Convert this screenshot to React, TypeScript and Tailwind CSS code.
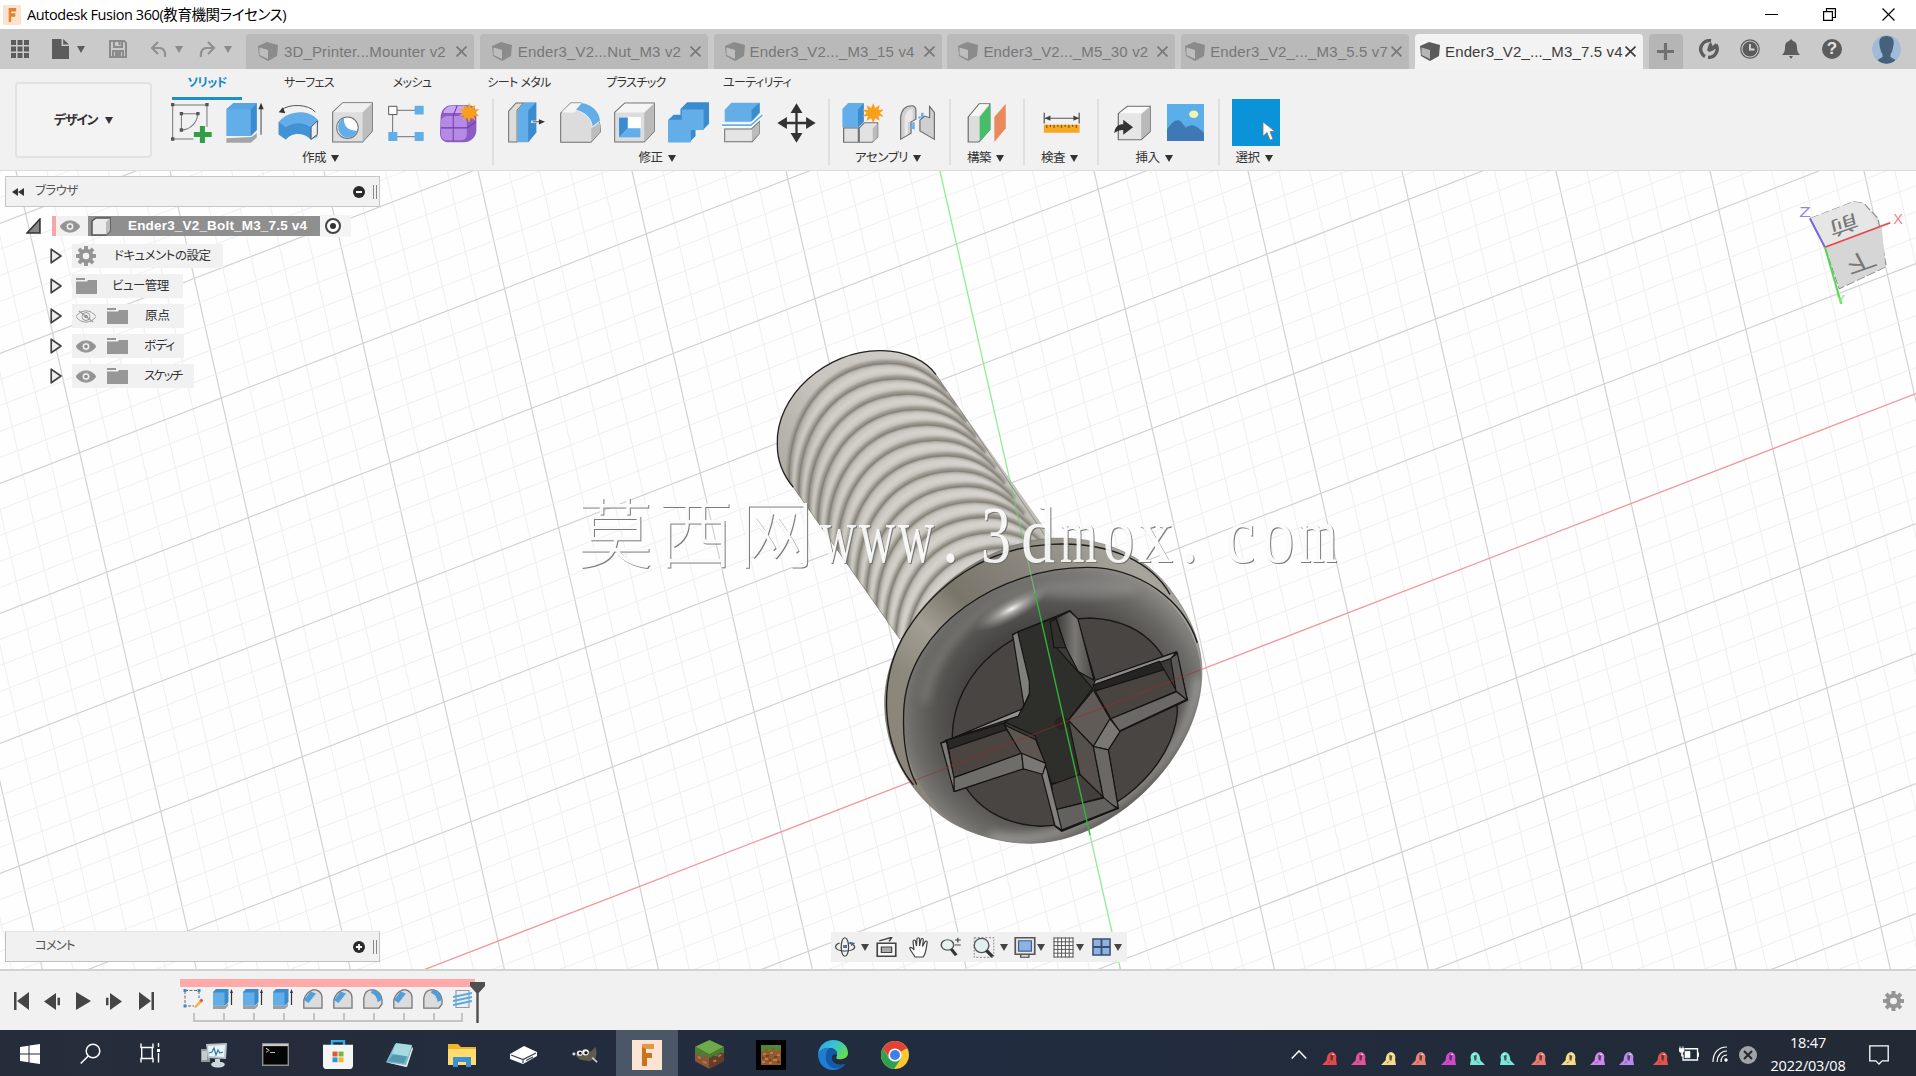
import type { ReactNode } from 'react'
import clsx from 'clsx'

type IconProps = { box: string; className?: string; children: ReactNode }

// Free-aspect icon: the box is stretched to the size given by the classes
function Icon({ box, className, children }: IconProps) {
  return (
    <svg viewBox={box} preserveAspectRatio="none" className={clsx('block shrink-0', className)} fill="none">
      {children}
    </svg>
  )
}

function Caret({ className }: { className?: string }) {
  return (
    <svg viewBox="0 0 8 7" className={clsx('block shrink-0 w-[8px] h-[7px]', className)}>
      <path d="M0 0h8L4 7z" fill="currentColor" />
    </svg>
  )
}

const JP = "font-['Liberation_Sans','Noto_Sans_CJK_JP',sans-serif] [font-feature-settings:'palt']"

/* ---------- title bar ---------- */

function TitleBar() {
  return (
    <div className="h-[29px] bg-white flex items-center shrink-0">
      <div className="w-[18px] h-[20px] ml-[3px] bg-[#fde3cd] flex items-center justify-center">
        <Icon box="0 0 12 16" className="w-[10px] h-[14px]">
          <path d="M2 0h9v4H5v2h5v4H5v6H2z" fill="#dd8435" />
        </Icon>
      </div>
      <span className="ml-[6px] text-[14.5px] leading-[28px] text-black whitespace-nowrap tracking-[-0.42px] font-['Open_Sans','Noto_Sans_CJK_JP',sans-serif] [font-feature-settings:'palt']">
        Autodesk Fusion 360(教育機関ライセンス)
      </span>
      <div className="ml-auto flex items-center h-full pr-[21px]">
        <div className="w-[13px] h-px bg-black mr-[45px]" />
        <svg viewBox="0 0 13 13" className="w-[13px] h-[13px] mr-[46px]" fill="none" stroke="#000" strokeWidth="1.2">
          <path d="M.6 3.6h8.8v8.8H.6zM3.5 3.2V.6h8.9v8.9H9.8" />
        </svg>
        <svg viewBox="0 0 12 12" className="w-[13px] h-[13px]" stroke="#000" strokeWidth="1.1">
          <path d="M.5.5l11 11M11.5.5l-11 11" />
        </svg>
      </div>
    </div>
  )
}

/* ---------- document tabs ---------- */

const TABS = [
  { name: '3D_Printer...Mounter v2', pad: 'pl-[12px]', gap: 'ml-[6px]' },
  { name: 'Ender3_V2...Nut_M3 v2', pad: 'pl-[12px]', gap: 'ml-[6px]' },
  { name: 'Ender3_V2..._M3_15 v4', pad: 'pl-[11px]', gap: 'ml-[5px]' },
  { name: 'Ender3_V2..._M5_30 v2', pad: 'pl-[11px]', gap: 'ml-[5px]' },
  { name: 'Ender3_V2_..._M3_5.5 v7', pad: 'pl-[4px]', gap: 'ml-[5px]' },
  { name: 'Ender3_V2_..._M3_7.5 v4', pad: 'pl-[5px]', gap: 'ml-[5px]', active: true },
]

function DocumentTabs() {
  return (
    <div className="h-[40px] bg-[#cacaca] flex shrink-0 text-[#5c5c5c]">
      <div className="w-[246px] flex items-center shrink-0">
        <Icon box="0 0 18 18" className="w-[18px] h-[18px] ml-[11px]">
          <path fill="currentColor" d="M0 0h5v5H0zM6.500 0h5v5h-5zM13 0h5v5h-5zM0 6.500h5v5H0zM6.500 6.500h5v5h-5zM13 6.500h5v5h-5zM0 13h5v5H0zM6.500 13h5v5h-5zM13 13h5v5h-5z" />
        </Icon>
        <Icon box="0 0 16 20" className="w-[17px] h-[20px] ml-[23px]">
          <path fill="currentColor" d="M0 0h9v7h7v13H0zM10.500 0L16 5.500h-5.500z" />
        </Icon>
        <Caret className="ml-[8px]" />
        <Icon box="0 0 18 18" className="w-[18px] h-[18px] ml-[24px] text-[#8b8b8b]">
          <path d="M1 1h14l2 2v14H1zM5 1v6h8V1M4 17v-6h10v6M6 13h6M6 15h6M10.500 2v3" stroke="currentColor" strokeWidth="2" />
        </Icon>
        <Icon box="0 0 17 17" className="w-[17px] h-[17px] ml-[23px] text-[#919191]">
          <path d="M8 1L2 7l6 6M2 7h8q6 1 5 9" stroke="currentColor" strokeWidth="2.200" />
        </Icon>
        <Caret className="ml-[8px] text-[#8a8a8a]" />
        <Icon box="0 0 17 17" className="w-[17px] h-[17px] ml-[16px] text-[#919191]">
          <path d="M9 1l6 6-6 6M15 7H7q-6 1-5 9" stroke="currentColor" strokeWidth="2.200" />
        </Icon>
        <Caret className="ml-[8px] text-[#8a8a8a]" />
      </div>
      <div className="flex items-end gap-[5.800px]">
        {TABS.map(t => (
          <div
            key={t.name}
            className={clsx(
              'w-[228px] h-[35px] rounded-t-[4px] flex items-center',
              t.pad,
              t.active ? 'bg-[#f3f3f3] text-[#3c3c3c]' : 'bg-[#b9b9b9] text-[#777]',
            )}
          >
            <Icon box="0 0 20 19" className="w-[20px] h-[19px]">
              <path d="M0 4L9 0l11 3-1 11-9 5-9-5z" fill={t.active ? '#5a5a5a' : '#8b8b8b'} />
              <path d="M1.500 5.500L10 8v9l-8.500-4z" fill={t.active ? '#b5b5b5' : '#bdbdbd'} />
            </Icon>
            <span className={clsx("flex-1 pt-[2px] text-[15px] whitespace-nowrap tracking-[0.150px] font-['Liberation_Sans',sans-serif]", t.gap)}>
              {t.name}
            </span>
            <Icon box="0 0 10 10" className="w-[11px] h-[11px] mr-[7px]">
              <path d="M.5.5l9 9M9.500.5l-9 9" stroke="currentColor" strokeWidth="1.500" />
            </Icon>
          </div>
        ))}
        <div className="w-[34px] h-[35px] rounded-t-[4px] bg-[#b5b5b5] flex items-center justify-center">
          <Icon box="0 0 16 16" className="w-[17px] h-[17px]">
            <path d="M8 0v16M0 8h16" stroke="#707070" strokeWidth="3" />
          </Icon>
        </div>
      </div>
      <div className="flex items-center ml-auto pr-[15px]">
        <Icon box="0 0 20 20" className="w-[20px] h-[20px] mr-[21px]">
          <path d="M6 17.500A8.500 8.500 0 0 1 12 1.800M17 5.500A8.500 8.500 0 0 1 9 18.300" stroke="#5c5c5c" strokeWidth="3.400" />
          <path d="M8 11l2-6 2-2 1.500 4L17 4l1 5-5 3-3 1z" fill="#5c5c5c" />
        </Icon>
        <Icon box="0 0 20 20" className="w-[20px] h-[20px] mr-[22px]">
          <circle cx="10" cy="10" r="9.200" stroke="#5c5c5c" strokeWidth="1.200" />
          <circle cx="10" cy="10" r="7.500" fill="#5c5c5c" />
          <path d="M10 5v5.500h4.500" stroke="#d8d8d8" strokeWidth="1.800" />
        </Icon>
        <Icon box="0 0 18 20" className="w-[18px] h-[20px] mr-[22px]">
          <path d="M9 0l2 2c3 1 4 3 4 7 0 3 1 5 3 7H0c2-2 3-4 3-7 0-4 1-6 4-7zM7 17h4l-2 3z" fill="#5c5c5c" />
        </Icon>
        <div className="w-[20px] h-[20px] rounded-full bg-[#5c5c5c] text-[#e2e2e2] text-[17px] leading-[20px] text-center font-bold font-['Liberation_Sans',sans-serif] mr-[30px]">
          ?
        </div>
        <Icon box="0 0 29 29" className="w-[29px] h-[29px] rounded-full">
          <circle cx="14.500" cy="14.500" r="14.500" fill="#9fbbd6" />
          <path d="M14.500 1c6 0 8 4 7 9-1 6-2 8-3 9v3l5 3c-5 5-13 5-18 0l5-3v-3c-1-1-2-3-3-9-1-5 1-9 7-9z" fill="#46617c" />
        </Icon>
      </div>
    </div>
  )
}

/* ---------- ribbon icons ---------- */

const B = '#63aee8'
const BD = '#3a8bd0'
const G = '#6f6f6f'

const star = 'M0-29l6 14 13-9-4 15 16-2-12 11 12 10-16-1 4 14-13-8-6 14-6-14-13 8 4-14-16 1 12-10-12-11 16 2-4-15 13 9z'

const SketchIcon = () => (
  <Icon box="34 98 122 120" className="w-[41px] h-[40px]">
    <path d="M39 104h102v66M39 104v102h62" stroke="#777" strokeWidth="3" />
    <path d="M65 130h48c0 25-20 48-48 49z" stroke="#777" strokeWidth="3" />
    <path fill="#555" d="M34 98h10v10H34zM136 98h10v10h-10zM34 201h10v10H34zM60 125h10v10H60zM109 125h10v10h-10zM60 174h10v10H60z" />
    <path fill="#2f9e44" d="M120 167h15v18h20v15h-20v18h-15v-18h-18v-15h18z" />
  </Icon>
)

const ExtrudeIcon = () => (
  <Icon box="197 96 118 124" className="w-[39px] h-[41px]">
    <path d="M198 206l76-4 16-12v14l-18 15h-74z" fill="#a5a5a5" />
    <path d="M198 118l22-19h70v82l-18 18h-74z" fill={B} />
    <path d="M272 118l18-19v82l-18 18z" fill={BD} />
    <path d="M198 118l22-19h70l-18 19z" fill="#57a5e2" />
    <path d="M303 110v85" stroke="#444" strokeWidth="3" />
    <path d="M303 98l8 20h-16z" fill="#333" />
  </Icon>
)

const RevolveIcon = () => (
  <Icon box="354 98 124 120" className="w-[41px] h-[40px]">
    <path d="M363 120c25-22 85-18 104 5" stroke="#555" strokeWidth="3" />
    <path d="M356 126l20 3-7-18z" fill="#333" />
    <path d="M356 155c30-36 90-40 120-5l-3 50-20 8c-25-25-60-20-75 0l-22-15z" fill={B} />
    <path d="M356 155l22 16c25-16 50-16 76 0v36c-25-25-60-20-76 0l-22-15z" fill={BD} opacity=".8" />
    <path d="M454 170l19-18v40l-19 15z" fill="#eee" stroke="#555" strokeWidth="3" />
  </Icon>
)

const HoleIcon = () => (
  <Icon box="516 98 122 121" className="w-[41px] h-[41px]">
    <path d="M518 128l30-28h88v84l-29 32h-89z" fill="#dedede" stroke={G} strokeWidth="3" />
    <path d="M607 129l28-28v82l-28 32z" fill="#bdbdbd" />
    <path d="M520 128l28-26h86l-27 26z" fill="#f0f0f0" />
    <circle cx="562" cy="174" r="32" fill="#fff" stroke={G} strokeWidth="3" />
    <path d="M552 144c-4 25 15 42 41 38-8 20-30 27-46 16-18-12-18-42 5-54z" fill={B} />
  </Icon>
)

const PatternIcon = () => (
  <Icon box="677 102 108 109" className="w-[36px] h-[36px]">
    <path d="M692 118h78M691 118v80M692 198h78" stroke={G} strokeWidth="3" />
    <path d="M679 106h25v25h-25z" fill="#fff" stroke="#555" strokeWidth="3" />
    <path d="M757 104h27v27h-27zM678 184h27v27h-27zM757 184h27v27h-27z" fill={B} />
  </Icon>
)

const FormIcon = () => (
  <Icon box="840 98 118 122" className="w-[39px] h-[41px]">
    <path d="M842 140c4-25 18-33 40-33h40c20 0 28 12 28 30v45c0 20-18 36-38 36h-44c-18 0-28-10-28-28z" fill="#8a5cc4" />
    <rect x="843" y="140" width="78" height="72" rx="17" fill="#b48ae6" />
    <path d="M850 128c8-16 16-19 34-19h38l-12 22h-58z" fill="#c8a6f0" />
    <path d="M843 175h79l26-18M880 215v-76l12-30" stroke="#6b3da0" strokeWidth="3" />
    <path d={star} transform="translate(928 130)" fill="#f9a01b" />
  </Icon>
)

const PressPullIcon = () => (
  <Icon box="55 97 110 122" className="w-[37px] h-[41px]">
    <path d="M57 124l22-24h22l-19 22v94H57z" fill="#dcdcdc" stroke={G} strokeWidth="3" />
    <path d="M84 122l20-24h35v90l-24 29H84z" fill={B} />
    <path d="M115 122l24-24v90l-24 29z" fill={BD} />
    <path d="M124 156h30" stroke="#fff" strokeWidth="7" />
    <path d="M128 156h25" stroke="#444" strokeWidth="3" />
    <path d="M165 156l-18-8v16z" fill="#333" />
  </Icon>
)

const FilletIcon = () => (
  <Icon box="212 97 122 122" className="w-[41px] h-[41px]">
    <path d="M214 130l30-30h30c40 5 58 40 58 86l-28 31h-90z" fill="#dcdcdc" stroke={G} strokeWidth="3" />
    <path d="M216 128l28-27h32l-20 27z" fill="#f5f5f5" />
    <path d="M276 99c40 5 56 36 56 54l-24 18c-2-22-16-42-50-50z" fill={B} stroke="#fff" strokeWidth="2" />
    <path d="M305 215v-40l26-17v28z" fill="#bdbdbd" />
  </Icon>
)

const ShellIcon = () => (
  <Icon box="374 97 122 122" className="w-[41px] h-[41px]">
    <path d="M376 128l30-28h88v84l-30 32h-88z" fill="#ddd" stroke={G} strokeWidth="3" />
    <path d="M464 129l28-28v82l-28 32z" fill="#bababa" />
    <path d="M379 128l27-26h86l-28 26z" fill="#f5f5f5" />
    <path d="M389 142h65v61h-65z" fill="#fff" />
    <path d="M389 203l27-28h37v28z" fill={B} />
    <path d="M389 143h26v33l-26 27z" fill={BD} />
  </Icon>
)

const CombineIcon = () => (
  <Icon box="535 97 122 122" className="w-[41px] h-[41px]">
    <path d="M536 150l16-15h20v-17l20-20h65v64l-18 18h-22v18l-18 19h-63z" fill={BD} />
    <path d="M536 150h40v-31h65v61h-38v37h-67z" fill={B} />
  </Icon>
)

const SplitIcon = () => (
  <Icon box="698 97 122 122" className="w-[41px] h-[41px]">
    <path d="M706 120l20-21h84v30l-24 27h-80z" fill={B} />
    <path d="M786 120l24-21v30l-24 27z" fill={BD} />
    <path d="M706 177h80l23-22v36l-21 24h-82z" fill="#e4e4e4" stroke={G} strokeWidth="3" />
    <path d="M787 178l22-21v34l-22 22z" fill="#bbb" />
    <path d="M698 166h86l34-31" stroke="#fff" strokeWidth="13" />
    <path d="M698 166h86l34-30" stroke={B} strokeWidth="5" />
  </Icon>
)

const MoveIcon = () => (
  <Icon box="860 97 118 120" className="w-[39px] h-[40px]">
    <path d="M919 115v84M880 157h80" stroke="#333" strokeWidth="7" />
    <path d="M919 98l18 29h-36zM919 216l18-29h-36zM861 157l29-18v36zM977 157l-29-18v36z" fill="#333" />
  </Icon>
)

const ComponentIcon = () => (
  <Icon box="497 308 100 122" className="w-[41px] h-[41px]">
    <path d="M501 385h36v43h-36zM539 385l12-15h33v42l-14 16h-31z" fill="#e2e2e2" stroke={G} strokeWidth="3" />
    <path d="M572 386l12-15v42l-12 14z" fill="#bbb" />
    <path d="M498 329l14-18h38v55l-14 18h-38z" fill={B} />
    <path d="M536 330l14-18v54l-14 18z" fill={BD} />
    <path d={star} transform="translate(573 341) scale(.85 1)" fill="#f9a01b" />
  </Icon>
)

const JointIcon = () => (
  <Icon box="634 312 92 110" className="w-[37px] h-[37px]">
    <path d="M638 417v-65c2-22 12-35 28-35 8 0 10 5 10 15v25l-12 8v34z" fill="#cfcfcf" stroke={G} strokeWidth="3" />
    <path d="M648 408v-55c2-15 8-25 20-27v35l-12 6v35z" fill="#e8e8e8" />
    <path d="M670 366v18l-9-3M692 338v25M688 352h-6" stroke={B} strokeWidth="6" />
    <path d="M722 417v-80l-12-18v34l-12-5-12 12v32z" fill="#cfcfcf" stroke={G} strokeWidth="3" />
  </Icon>
)

const ConstructIcon = () => (
  <Icon box="803 308 98 120" className="w-[40px] h-[40px]">
    <path d="M806 350l27-40h26v78l-27 37h-26z" fill="#ddd" stroke={G} strokeWidth="3" />
    <path d="M834 350l26-39v76l-26 39z" fill="#46bd68" />
    <path d="M810 347l24-35h23l-24 35z" fill="#f6f6f6" />
    <path d="M870 350l28-40v74l-28 41z" fill="#e98a5c" />
  </Icon>
)

const MeasureIcon = () => (
  <Icon box="987 336 90 64" className="w-[37px] h-[21px]">
    <path d="M990 338v33M1075 338v33M992 355h82" stroke="#555" strokeWidth="3" />
    <path d="M991 355l14-8v16zM1075 355l-14-8v16z" fill="#444" />
    <path d="M989 375h87v24h-87z" fill="#f7a823" />
    <path d="M996 375v10M1005 375v7M1014 375v10M1023 375v7M1032 375v10M1041 375v7M1050 375v10M1059 375v7M1068 375v10" stroke="#8a5a10" strokeWidth="3" />
  </Icon>
)

const InsertIcon = () => (
  <Icon box="1161 312 93 108" className="w-[38px] h-[36px]">
    <path d="M1174 338l22-22h56v76l-22 24h-56z" fill="#e6e6e6" stroke={G} strokeWidth="3" />
    <path d="M1230 340l21-22v73l-21 23z" fill="#b9b9b9" />
    <path d="M1177 337l20-19h52l-19 19z" fill="#fafafa" />
    <path d="M1164 397c2-20 10-27 22-27v-14l24 23-24 22v-14c-9 0-15 3-22 10z" fill="#333" />
  </Icon>
)

const CanvasIcon = () => (
  <Icon box="1292 312 90 108" className="w-[37px] h-[37px]">
    <path d="M1292 312h90v108h-90z" fill="#5aaeea" />
    <path d="M1292 385c14-22 24-32 34-22l12 18c10-10 22-12 44 16v23h-90z" fill="#3f79b5" />
    <circle cx="1357" cy="342" r="11" fill="#f6f2b0" />
  </Icon>
)

const SelectIcon = () => (
  <div className="w-[48px] h-[47px] bg-[#0a93d9] flex">
    <Icon box="0 0 13 22" className="w-[13px] h-[21px] ml-[30px] mt-[22px]">
      <path d="M1 1v15l4-4 3 8 3-1-3-8h5z" fill="#fff" stroke="#777" strokeWidth=".8" />
    </Icon>
  </div>
)

const GROUPS = [
  { label: '作成', width: 'w-[335px]', shift: 'pr-[10px]', cell: 'w-[53.600px]', icons: [SketchIcon, ExtrudeIcon, RevolveIcon, HoleIcon, PatternIcon, FormIcon] },
  { label: '修正', width: 'w-[336px]', shift: 'pr-[8px]', cell: 'w-[54px]', icons: [PressPullIcon, FilletIcon, ShellIcon, CombineIcon, SplitIcon, MoveIcon] },
  { label: 'アセンブリ', width: 'w-[121px]', shift: 'pr-[3px]', cell: 'w-[55px]', icons: [ComponentIcon, JointIcon] },
  { label: '構築', width: 'w-[74px]', shift: 'pr-[3px]', cell: 'w-[54px]', icons: [ConstructIcon] },
  { label: '検査', width: 'w-[74px]', shift: 'pr-[3px]', cell: 'w-[54px]', icons: [MeasureIcon] },
  { label: '挿入', width: 'w-[121px]', shift: 'pr-[9px]', cell: 'w-[53px]', icons: [InsertIcon, CanvasIcon] },
  { label: '選択', width: 'w-[71px]', shift: 'pr-[3px]', cell: 'w-[54px]', icons: [SelectIcon] },
]

const RIBBON_TABS = [
  { name: 'ソリッド', width: 'w-[70px]', active: true },
  { name: 'サーフェス', width: 'w-[134px]' },
  { name: 'メッシュ', width: 'w-[72px]' },
  { name: 'シート メタル', width: 'w-[142px]' },
  { name: 'プラスチック', width: 'w-[92px]' },
  { name: 'ユーティリティ', width: 'w-[150px]' },
]

function Ribbon() {
  return (
    <div className={clsx('h-[102px] bg-[#f1f1f1] border-b border-[#dcdcdc] flex shrink-0 text-[#333]', JP)}>
      <div className="w-[137px] h-[76px] mt-[13px] ml-[15px] rounded-[4px] border-2 border-[#e2e2e2] bg-[#f3f3f3] flex items-center justify-center gap-[6px] text-[13px] font-bold tracking-[-1.400px] shrink-0">
        デザイン
        <Caret className="w-[7px] h-[6px] ml-[2px]" />
      </div>
      <div className="flex flex-col ml-[7px]">
        <div className="flex h-[30px] pl-[13px] shrink-0">
          {RIBBON_TABS.map(t => (
            <div
              key={t.name}
              className={clsx(
                'flex flex-col justify-between items-center text-[12px] leading-[28px] tracking-[-0.600px] whitespace-nowrap',
                t.width,
                t.active && 'text-[#1287c8] font-bold',
              )}
            >
              <span>{t.name}</span>
              {t.active && <div className="w-full h-[3px] bg-[#1b8fcb] shrink-0" />}
            </div>
          ))}
        </div>
        <div className="flex">
          {GROUPS.map(g => (
            <div key={g.label} className={clsx('flex flex-col items-center h-[66px] border-r-2 border-[#e0e0e0] last:border-r-0', g.width)}>
              <div className="flex h-[47px] shrink-0">
                {g.icons.map((I, i) => (
                  <div key={i} className={clsx('flex items-center justify-center', g.cell)}>
                    <I />
                  </div>
                ))}
              </div>
              <div className={clsx('flex items-center gap-[5px] text-[12.500px] leading-[25px] tracking-[-0.400px] whitespace-nowrap', g.shift)}>
                {g.label}
                <Caret className="w-[7px] h-[6px]" />
              </div>
            </div>
          ))}
        </div>
      </div>
    </div>
  )
}

/* ---------- canvas scene ---------- */

const range = (from: number, to: number) => Array.from({ length: to - from + 1 }, (_, i) => from + i)

function Grid() {
  return (
    <g fill="none">
      {range(-36, 32).filter(i => i !== 0).map(i => (
        <path key={`s${i}`} d={`M${940 + i * 30.8} 171l180.300 798`} stroke={i % 5 ? '#efefef' : '#d2d2d2'} strokeWidth={i % 5 ? 1 : 1.2} />
      ))}
      {range(-37, 22).filter(i => i !== 0).map(i => (
        <path key={`f${i}`} d={`M0 ${1133.5 + i * 26}l1916-740`} stroke={i % 5 ? '#efefef' : '#d2d2d2'} strokeWidth={i % 5 ? 1 : 1.2} />
      ))}
    </g>
  )
}

const SHAFT = 'M112 340C105 195 260 60 420 61 500 60 560 94 588 132L625 185 960 650 760 1000 480 915 160 465C130 430 112 385 112 340z'
const HEAD = 'M434 1110C430 870 680 630 940 616 1120 610 1240 692 1300 780 1365 870 1390 950 1385 1030 1375 1260 1130 1510 880 1518 780 1522 650 1480 590 1425 500 1350 436 1240 434 1110z'
const DOME = 'M491 1130C500 870 790 702 1040 702 1270 710 1388 890 1384 1030 1375 1260 1130 1510 880 1518 780 1522 650 1480 600 1425 530 1350 488 1260 491 1130z'
const FACE = 'M637 1200C640 1010 820 860 1050 852 1230 860 1312 980 1312 1130 1300 1290 1120 1462 900 1468 750 1460 637 1370 637 1200z'

const FACETS = [
  { d: 'M818 900L990 830 1012 855 1066 1038 1310 952 1342 1095 1138 1188 1105 1242 1135 1415 965 1483 945 1468 910 1312 850 1298 645 1365 603 1222 845 1122 866 1085z', fill: '#3d3b38' },
  { d: 'M833 893L945 850 948 938 1015 1012 1058 1060 985 1155 1045 1320 935 1342 885 1200 795 1160 845 1125 868 1080z', fill: '#2e2e2a' },
  { d: 'M948 852L990 832 1014 855 1062 1036 1015 1010 975 935z', fill: 'url(#wall)' },
  { d: 'M930 862L948 855 978 940 942 940z', fill: '#32302d' },
  { d: 'M818 902L833 893 868 1040 868 1075 852 1110z', fill: '#7f7f7c' },
  { d: 'M1066 1036L1310 952 1292 972 1060 1050z', fill: '#8a8a87' },
  { d: 'M1060 1050L1258 980 1272 1005 1066 1068z', fill: '#252422' },
  { d: 'M1066 1068L1272 1005 1310 1068 1113 1150z', fill: '#4a4441' },
  { d: 'M1113 1150L1310 1070 1342 1092 1138 1186z', fill: '#6a6966' },
  { d: 'M1292 972L1312 956 1342 1095 1308 1068z', fill: '#5b5957' },
  { d: 'M1060 1065L1110 1150 1060 1232 985 1155z', fill: '#605b56' },
  { d: 'M1110 1150L1140 1188 1105 1242 1060 1232z', fill: '#7a7874' },
  { d: 'M985 1155L1060 1232 1092 1395 1020 1315z', fill: '#55504b' },
  { d: 'M1060 1232L1105 1242 1135 1415 1092 1392z', fill: '#6b6966' },
  { d: 'M935 1345L1020 1315 1090 1382 943 1420z', fill: '#433f3c' },
  { d: 'M943 1420L1092 1384 1130 1415 962 1480z', fill: '#63615e' },
  { d: 'M905 1312L918 1290 966 1480 945 1466z', fill: '#81807c' },
  { d: 'M603 1222L845 1122 835 1142 620 1213z', fill: '#949390' },
  { d: 'M620 1213L795 1162 800 1185 626 1240z', fill: '#2a2826' },
  { d: 'M626 1240L800 1182 845 1252 640 1325z', fill: '#4b4441' },
  { d: 'M640 1325L845 1252 850 1298 642 1365z', fill: '#6f6d6a' },
  { d: 'M603 1222L619 1217 642 1325 642 1365z', fill: '#7b7a77' },
  { d: 'M793 1168L887 1212 916 1282 845 1255z', fill: '#5d5650' },
  { d: 'M845 1252L918 1282 908 1314 850 1298z', fill: '#7a7875' },
]

function Bolt() {
  return (
    <g transform="translate(740 330) scale(.33333 .33806)">
      <defs>
        <linearGradient id="shaft" x1="0" y1=".6" x2="1" y2=".2">
          <stop offset="0" stopColor="#a6a39b" />
          <stop offset=".3" stopColor="#c9c6bf" />
          <stop offset=".7" stopColor="#d0cdc7" />
          <stop offset="1" stopColor="#a4a19a" />
        </linearGradient>
        <linearGradient id="collar" x1="0" y1="1" x2="1" y2="0">
          <stop offset="0" stopColor="#8a8477" />
          <stop offset=".3" stopColor="#8c877b" />
          <stop offset=".42" stopColor="#a39e94" />
          <stop offset=".52" stopColor="#7a756b" />
          <stop offset=".68" stopColor="#8a867d" />
          <stop offset=".85" stopColor="#a7a59d" />
          <stop offset="1" stopColor="#6f6c66" />
        </linearGradient>
        <radialGradient id="dome" cx=".51" cy=".53" r=".56">
          <stop offset=".55" stopColor="#454341" />
          <stop offset=".72" stopColor="#565552" />
          <stop offset=".86" stopColor="#6c6b68" />
          <stop offset="1" stopColor="#8d8c87" />
        </radialGradient>
        <radialGradient id="glint">
          <stop offset="0" stopColor="#fff" stopOpacity=".95" />
          <stop offset=".35" stopColor="#d5d4d0" stopOpacity=".6" />
          <stop offset="1" stopColor="#a0a09c" stopOpacity="0" />
        </radialGradient>
        <linearGradient id="wall" x1="0" y1="0" x2="1" y2="0">
          <stop offset="0" stopColor="#3a3835" />
          <stop offset=".5" stopColor="#7a7875" />
          <stop offset="1" stopColor="#4a4845" />
        </linearGradient>
        <clipPath id="shaftClip"><path d={SHAFT} /></clipPath>
        <clipPath id="domeClip"><path d={DOME} /></clipPath>
        <filter id="soft"><feGaussianBlur stdDeviation="4" /></filter>
        <filter id="softer"><feGaussianBlur stdDeviation="12" /></filter>
      </defs>

      <path d={SHAFT} fill="url(#shaft)" />
      <g clipPath="url(#shaftClip)" fill="none">
        {range(0, 15).map(i => (
          <g key={i} transform={`translate(${i * 29} ${i * 45.5})`}>
            <path d="M160 520C110 330 210 100 440 96 510 94 570 120 620 180" stroke="#908c83" strokeWidth="14" filter="url(#soft)" />
            <path d="M158 515C114 330 210 103 440 99 510 97 570 122 620 182" stroke="#7f7b72" strokeWidth="4" opacity=".7" />
            <path d="M172 545C130 360 225 126 450 119 520 117 580 146 625 200" stroke="#dddbd6" strokeWidth="9" opacity=".65" filter="url(#soft)" />
          </g>
        ))}
      </g>
      <path d="M160 465C130 430 112 385 112 340 105 195 260 60 420 61 500 60 560 94 588 132" fill="none" stroke="#222" strokeWidth="4" />
      <path d="M160 465L480 915M588 132L625 185 915 608" fill="none" stroke="#77736b" strokeWidth="2" />

      <path d={HEAD} fill="url(#collar)" stroke="#74716b" strokeWidth="2" />
      <path d="M520 1345C430 1240 405 1040 500 890 590 750 740 645 930 634 1120 624 1240 694 1290 782" fill="none" stroke="#1c1b1a" strokeWidth="4" />
      <path d={DOME} fill="url(#dome)" />
      <g clipPath="url(#domeClip)">
        <g filter="url(#softer)">
          <path d="M555 1090C580 940 720 810 860 765" stroke="#8d8c88" strokeWidth="30" strokeLinecap="round" fill="none" opacity=".45" />
          <path d="M760 1500C1000 1540 1340 1320 1372 1040" stroke="#b4b3ae" strokeWidth="30" strokeLinecap="round" fill="none" opacity=".6" />
          <ellipse cx="1030" cy="765" rx="160" ry="28" fill="#a3a39f" opacity=".4" />
        </g>
        <ellipse cx="815" cy="825" rx="125" ry="34" transform="rotate(-28 815 825)" fill="url(#glint)" />
      </g>
      <path d="M530 1345C500 1290 488 1210 491 1130 500 870 790 702 1040 702 1200 702 1330 800 1372 925" fill="none" stroke="#1c1b1a" strokeWidth="4" />
      <path d={FACE} fill="#484542" stroke="#181716" strokeWidth="4" />
      {FACETS.map(f => (
        <path key={f.d} d={f.d} fill={f.fill} stroke="#151413" strokeWidth="3.500" strokeLinejoin="round" />
      ))}
      <ellipse cx="965" cy="1163" rx="22" ry="20" fill="#2b2321" />
    </g>
  )
}

// Half-width cells of the overlay text: glyph, left edge, drawn width
const LATIN: [string, number, number][] = [
  ['w', 820, 36], ['w', 859, 36], ['w', 898, 36], ['.', 942, 17], ['3', 981, 30], ['d', 1021, 34], ['m', 1060, 37],
  ['o', 1103, 31], ['x', 1138, 35], ['.', 1181, 17], ['c', 1225, 30], ['o', 1262, 32], ['m', 1299, 38],
]

function Watermark() {
  return (
    <g fill="#fbfbfb" opacity=".92" className="drop-shadow-[1.5px_1.5px_0.3px_#707070]">
      <text x="577" y="562" fontSize="76" textLength="237" fontFamily="'Noto Sans CJK SC', sans-serif" fontWeight="300">莫西网</text>
      {LATIN.map(([c, x, w]) => (
        <text key={x} x={x} y="562" fontSize="80" textLength={w} lengthAdjust="spacingAndGlyphs" fontFamily="'Liberation Serif', serif">{c}</text>
      ))}
    </g>
  )
}

function ViewCube() {
  return (
    <g transform="translate(1276 0) scale(.40816 .33333)">
      <path d="M1310 655L1415 605 1440 610 1475 655 1495 800 1380 866 1345 742z" transform="translate(0 0)" fill="#dedede" stroke="#8a8a8a" strokeWidth="3" strokeDasharray="22 7" />
      <path d="M1310 655L1415 605 1440 610 1478 680 1347 742z" fill="#e6e6e6" />
      <path d="M1347 742L1484 678 1493 800 1380 864z" fill="#d6d6d6" />
      <text transform="translate(1422 640) rotate(157) skewX(-12) scale(1.35 1)" fontSize="56" fill="#777" fontFamily="'Noto Sans CJK JP', sans-serif">前</text>
      <text transform="translate(1458 750) rotate(157) scale(1.200 1)" fontSize="64" fill="#777" fontFamily="'Noto Sans CJK JP', sans-serif">下</text>
      <path d="M1308 655L1345 742" stroke="#7468e0" strokeWidth="5" />
      <path d="M1345 742L1505 668" stroke="#e04c50" strokeWidth="5" />
      <path d="M1345 742L1385 912" stroke="#4fdc50" strokeWidth="5" />
      <g fontFamily="'Liberation Sans', sans-serif" fontSize="46">
        <text x="1282" y="650" fill="#8d86ea">Z</text>
        <text x="1512" y="673" fill="#f48488" textLength="24" lengthAdjust="spacingAndGlyphs">X</text>
        <text x="1372" y="912" fill="#74ec74" textLength="22" lengthAdjust="spacingAndGlyphs" fontSize="38">Y</text>
      </g>
    </g>
  )
}

function Scene() {
  return (
    <svg viewBox="0 171 1916 798" className="absolute inset-0 w-full h-full bg-[#fefefe]">
      <Grid />
      <path d="M0 1133.500L1916 393.500" stroke="#f3989c" strokeWidth="1.300" />
      <path d="M940 171L1120.300 969" stroke="#8fee93" strokeWidth="1.300" />
      <Bolt />
      <path d="M913 781L1200 670" stroke="#a02a2a" strokeWidth="1.200" opacity=".5" />
      <path d="M1010 481L1035 593" stroke="#6fd070" strokeWidth="1.200" opacity=".7" />
      <path d="M1035 593L1090 835" stroke="#2fb838" strokeWidth="1.300" />
      <Watermark />
      <ViewCube />
    </svg>
  )
}

/* ---------- browser panel ---------- */

const Eye = ({ off }: { off?: boolean }) => (
  <Icon box="0 0 20 13" className="w-[20px] h-[13px]">
    <path d="M0 6.500C5-1 15-1 20 6.500 15 14 5 14 0 6.500z" fill={off ? 'none' : '#929292'} stroke="#9a9a9a" strokeWidth="1" />
    <circle cx="10" cy="6.500" r="4" fill={off ? 'none' : '#ededed'} stroke="#9a9a9a" strokeWidth="1" />
    <circle cx="10" cy="6.500" r="1.800" fill="#8c8c8c" />
    {off && <path d="M3 1l14 11" stroke="#9a9a9a" strokeWidth="1.300" />}
  </Icon>
)

const Folder = () => (
  <Icon box="0 0 21 16" className="w-[21px] h-[16px]">
    <path d="M0 0h9v2H0zM0 3.500h11L12 2h9v14H0z" fill="#979797" />
  </Icon>
)

const Gear = ({ className }: { className?: string }) => (
  <Icon box="-10 -10 20 20" className={className}>
    <circle r="5.300" stroke="#949494" strokeWidth="4" />
    {range(0, 7).map(i => (
      <path key={i} d="M-1.900-10h3.800v4h-3.800z" fill="#949494" transform={`rotate(${i * 45})`} />
    ))}
  </Icon>
)

const Expander = () => (
  <Icon box="0 0 12 16" className="w-[12px] h-[16px]">
    <path d="M1.200 1.200v13.600L11 8z" fill="#eee" stroke="#444" strokeWidth="1.700" strokeLinejoin="round" />
  </Icon>
)

const ROWS = [
  { name: 'ドキュメントの設定', kind: 'gear', text: 'ml-[18px] tracking-[-0.500px]', width: 'w-[151px]' },
  { name: 'ビュー管理', kind: 'folder', text: 'ml-[15px] tracking-[-0.500px]', width: 'w-[111px]' },
  { name: '原点', kind: 'hidden', text: 'ml-[17px]', width: 'w-[112px]' },
  { name: 'ボディ', kind: 'shown', text: 'ml-[16px] tracking-[-0.800px]', width: 'w-[112px]' },
  { name: 'スケッチ', kind: 'shown', text: 'ml-[16px] tracking-[-1.700px]', width: 'w-[122px]' },
]

function BrowserTree() {
  return (
    <div className={clsx('relative text-[12.500px] text-[#333]', JP)}>
      <div className="w-[375px] h-[31px] mt-[5px] ml-[5px] bg-[#f1f1f1] border border-[#c6c6c6] flex items-center">
        <Icon box="0 0 13 8" className="w-[12px] h-[8px] ml-[6px]">
          <path d="M6.500 0v8L0 4zM13 0v8L6.500 4z" fill="#333" />
        </Icon>
        <span className="ml-[11px] tracking-[-0.600px] text-[#555]">ブラウザ</span>
        <div className="ml-auto w-[12px] h-[12px] rounded-full bg-[#2b2b2b] flex items-center justify-center">
          <div className="w-[6px] h-[2px] bg-white" />
        </div>
        <div className="ml-[8px] mr-[2px] h-[14px] w-[4px] border-x border-[#888]" />
      </div>
      <div className="flex items-center h-[20px] mt-[9px] ml-[26px]">
        <Icon box="0 0 14 15" className="w-[15px] h-[16px]">
          <path d="M13 1v13H1z" fill="#888" stroke="#333" strokeWidth="1.500" />
        </Icon>
        <div className="ml-[11px] w-[4px] h-full bg-[#f4a6ac]" />
        <div className="w-[32px] h-full bg-[#f1f1f1] flex items-center pl-[4px]"><Eye /></div>
        <div className="w-[232px] h-full bg-[#8f8f8f] flex items-center pl-[3px]">
          <Icon box="0 0 20 19" className="w-[20px] h-[19px]">
            <path d="M1 4l4-3h14v13l-4 4H1z" fill="#ebebeb" stroke="#555" strokeWidth="1.500" />
            <path d="M15 5l4-4v13l-4 4z" fill="#bbb" />
          </Icon>
          <span className="ml-[17px] text-[13.500px] font-bold text-white whitespace-nowrap tracking-[0.180px]">Ender3_V2_Bolt_M3_7.5 v4</span>
        </div>
        <div className="w-[31px] h-[22px] bg-[#f4f4f4] pl-[5px] flex items-center">
          <div className="w-[16px] h-[16px] rounded-full border-2 border-[#444] bg-white flex items-center justify-center">
            <div className="w-[6px] h-[6px] rounded-full bg-[#333]" />
          </div>
        </div>
      </div>
      <div className="flex flex-col gap-[6px] mt-[8px] ml-[50px]">
        {ROWS.map(r => (
          <div key={r.name} className="flex items-center h-[24px]">
            <Expander />
            <div className={clsx('ml-[10px] h-full bg-[#f1f1f1] flex items-center pl-[4px]', r.width)}>
              {r.kind === 'gear' && <Gear className="w-[20px] h-[20px]" />}
              {r.kind === 'folder' && <Folder />}
              {(r.kind === 'hidden' || r.kind === 'shown') && (
                <>
                  <Eye off={r.kind === 'hidden'} />
                  <div className="ml-[11px]"><Folder /></div>
                </>
              )}
              <span className={clsx('whitespace-nowrap', r.text)}>{r.name}</span>
            </div>
          </div>
        ))}
      </div>
    </div>
  )
}

function CommentBar() {
  return (
    <div className={clsx('w-[375px] h-[31px] bg-[#f1f1f1] border border-t-[#e4e4e4] border-[#c0c0c0] flex items-center text-[12.500px] text-[#555]', JP)}>
      <span className="ml-[29px] tracking-[-1px]">コメント</span>
      <div className="ml-auto w-[12px] h-[12px] rounded-full bg-[#2b2b2b]">
        <Icon box="0 0 12 12" className="w-[12px] h-[12px]"><path d="M6 3v6M3 6h6" stroke="#fff" strokeWidth="1.800" /></Icon>
      </div>
      <div className="ml-[8px] mr-[2px] h-[14px] w-[4px] border-x border-[#888]" />
    </div>
  )
}

function NavBar() {
  return (
    <div className="h-[30px] w-[296px] bg-[#f0f0f0] flex items-center pl-[4px] text-[#444]">
      <Icon box="722 84 51 60" className="w-[21px] h-[20px]">
        <ellipse cx="746" cy="114" rx="9" ry="28" stroke="#444" strokeWidth="3" fill="#eef2f7" />
        <path d="M733 102c-14 6-12 20 4 23 20 4 36-4 32-14-2-5-8-8-14-10" stroke="#444" strokeWidth="3" />
        <path d="M758 98l13 4-9 10zM742 108h9v9h-9z" fill="#4b6d94" />
      </Icon>
      <Caret className="ml-[5px] w-[7px] h-[6px]" />
      <Icon box="822 86 51 58" className="w-[21px] h-[20px] ml-[7px]">
        <path d="M825 104h45v38h-45z" fill="#f8f8f8" stroke="#444" strokeWidth="4" />
        <path d="M835 115h25v16h-25z" fill="#aaa" stroke="#444" strokeWidth="3" />
        <path d="M830 97l30-10-6 12" stroke="#444" strokeWidth="4" />
      </Icon>
      <Icon box="0 0 20 22" className="w-[20px] h-[21px] ml-[12px]">
        <path d="M6 21C4 17 1 14 .7 11.500c1-1.500 3 0 4.300 2L4 4.500c.5-2 2-1.500 2.500 0l1 5L8 2c.5-1.700 2.200-1.500 2.500 0v7.500l1.500-7c.8-1.500 2.300-1 2.300.5L13.500 10l2.500-5c1-1.200 2.500-.5 2.200 1C17 12 17 18 14 21z" fill="#fff" stroke="#444" strokeWidth="1.200" />
      </Icon>
      <Icon box="980 84 53 58" className="w-[22px] h-[20px] ml-[11px]">
        <circle cx="998" cy="107" r="15" fill="#e8f0f2" stroke="#555" strokeWidth="3.500" />
        <path d="M1007 119l12 18" stroke="#333" strokeWidth="8" />
        <path d="M1016 93h14M1023 86v14M1016 107h14" stroke="#444" strokeWidth="3" />
      </Icon>
      <Icon box="1060 82 54 62" className="w-[22px] h-[21px] ml-[11px]">
        <path d="M1063 84h48v58h-48z" stroke="#666" strokeWidth="2" strokeDasharray="5 4" />
        <ellipse cx="1081" cy="107" rx="18" ry="21" fill="#e2efef" stroke="#555" strokeWidth="3.500" />
        <path d="M1093 122l15 18" stroke="#333" strokeWidth="9" />
      </Icon>
      <Caret className="ml-[5px] w-[7px] h-[6px]" />
      <Icon box="1161 83 53 61" className="w-[22px] h-[21px] ml-[6px]">
        <path d="M1177 132h20v10h-20z" stroke="#444" strokeWidth="3" fill="#ddd" />
        <path d="M1164 85h47v48h-47z" fill="#e8e8e8" stroke="#555" strokeWidth="4" />
        <path d="M1172 94h31v30h-31z" fill="#8fb2e4" stroke="#3f5f8e" strokeWidth="3" />
      </Icon>
      <Caret className="ml-[1px] w-[7px] h-[6px]" />
      <Icon box="0 0 21 21" className="w-[21px] h-[21px] ml-[8px]">
        <path d="M1 1h19v19H1z" fill="#fff" />
        <path d="M1 .5v20M4.800.5v20M8.600.5v20M12.400.5v20M16.200.5v20M20 .5v20M.5 1h20M.5 4.800h20M.5 8.600h20M.5 12.400h20M.5 16.200h20M.5 20h20" stroke="#555" strokeWidth="1" />
      </Icon>
      <Caret className="ml-[2px] w-[7px] h-[6px]" />
      <Icon box="0 0 20 18" className="w-[19px] h-[18px] ml-[8px]">
        <path d="M1 1h18v16H1z" fill="#8fb2e4" stroke="#3b4f70" strokeWidth="1.600" />
        <path d="M10 1v16M1 9h18" stroke="#3b4f70" strokeWidth="2" />
      </Icon>
      <Caret className="ml-[3px] w-[7px] h-[6px]" />
    </div>
  )
}

function Viewport() {
  return (
    <div className="relative h-[798px] shrink-0 overflow-hidden flex flex-col">
      <Scene />
      <BrowserTree />
      <div className="relative mt-auto mb-[7px] flex items-end pl-[5px] gap-[451px]">
        <CommentBar />
        <NavBar />
      </div>
    </div>
  )
}

/* ---------- timeline ---------- */

const FEATURES = ['sketch', 'extrude', 'extrude', 'extrude', 'chamfer', 'chamfer', 'fillet', 'chamfer', 'fillet', 'thread']

function FeatureIcon({ kind }: { kind: string }) {
  return (
    <Icon box="0 0 20 20" className="w-[20px] h-[20px]">
      {kind === 'sketch' && (
        <>
          <path d="M2 1.500h14M2 2v15h9M16 2v7" stroke="#666" strokeDasharray="3 1.500" />
          <path d="M.5 0h3v3h-3zM14.500 0h3v3h-3zM.5 15.500h3v3h-3z" fill="#3a8bd0" />
          <path d="M11 18l6-7 2 2-6 6z" fill="#f0b53c" />
          <path d="M16.500 11.500l1.500-2 2.500 2-2 2z" fill="#e4545c" />
        </>
      )}
      {kind === 'extrude' && (
        <>
          <path d="M0 17l12 0 3-3v3l-3 3H0z" fill="#9f9f9f" />
          <path d="M0 3l3-3h12.500v13L12 16.500H0z" fill={BD} />
          <path d="M0 3.500h11.500v13H0z" fill={B} />
          <path d="M18.500 3v13" stroke="#333" strokeWidth="1.200" />
          <path d="M18.500 0l1.500 4h-3z" fill="#333" />
        </>
      )}
      {kind === 'chamfer' && (
        <>
          <path d="M.8 19.200V11Q3 3 10 .8h3q6 2 6 8v10.400z" fill="#dcdcdc" stroke="#777" strokeWidth="1.300" />
          <path d="M1 11L7.500 2.500l5.500 2L5.500 14z" fill="#4f9fdf" />
        </>
      )}
      {kind === 'fillet' && (
        <>
          <path d="M.8 19.200V9Q2 1 8 .8h3q7 2 8 10V15l-3 4.200z" fill="#dcdcdc" stroke="#777" strokeWidth="1.300" />
          <path d="M9 1q9 1 10 10l-4.500 2Q14 6 8 4z" fill="#4f9fdf" />
        </>
      )}
      {kind === 'thread' && (
        <>
          <path d="M3 1.500h13v17H3z" fill="#eee" stroke="#999" strokeWidth="1.200" />
          <path d="M0 8l19-4M0 12l19-4M0 16l19-4" stroke="#5aa9e6" strokeWidth="2" />
        </>
      )}
    </Icon>
  )
}

function Timeline() {
  return (
    <div className="h-[61px] bg-[#f1f1f1] border-t-2 border-[#d2d2d2] flex shrink-0">
      <div className="flex items-center w-[180px] h-[60px] pl-[14px] shrink-0 text-[#454545]">
        <Icon box="0 0 15 18" className="w-[15px] h-[18px]"><path d="M0 0h2.500v18H0zM15 0v18L3 9z" fill="currentColor" /></Icon>
        <Icon box="0 0 16 18" className="w-[16px] h-[17px] ml-[15px]"><path d="M12 0v18L0 9zM13.500 5H16v8h-2.500z" fill="currentColor" /></Icon>
        <Icon box="0 0 15 18" className="w-[15px] h-[18px] ml-[16px]"><path d="M0 0v18L15 9z" fill="currentColor" /></Icon>
        <Icon box="0 0 16 18" className="w-[16px] h-[17px] ml-[15px]"><path d="M4 0v18L16 9zM0 5h2.500v8H0z" fill="currentColor" /></Icon>
        <Icon box="0 0 15 18" className="w-[15px] h-[18px] ml-[17px]"><path d="M12.500 0H15v18h-2.500zM0 0v18l12-9z" fill="currentColor" /></Icon>
      </div>
      <div className="w-[290px] pt-[8px]">
        <div className="h-[8px] w-[295px] bg-[#ffa9a9]" />
        <div className="flex gap-[10px] pt-[2px] pl-[3px]">
          {FEATURES.map((f, i) => <FeatureIcon key={i} kind={f} />)}
        </div>
        <div className="flex ml-[13px] mt-[4px] w-[270px] border-b-2 border-[#c4c4c4]">
          {FEATURES.slice(1).map((_, i) => (
            <div key={i} className="w-[30px] h-[7px] border-l-2 border-[#c4c4c4] last:border-r-2" />
          ))}
        </div>
      </div>
      <Icon box="0 0 16 41" className="w-[15px] h-[41px] mt-[11px]">
        <path d="M0 0h16v4L9.300 11v30H6.700V11L0 4z" fill="#505050" />
      </Icon>
      <Gear className="w-[21px] h-[20px] ml-auto mr-[12px] mt-[20px]" />
    </div>
  )
}

/* ---------- taskbar ---------- */

const APPS: { name: string; active?: boolean; icon: ReactNode }[] = [
  {
    name: 'monitor',
    icon: (
      <Icon box="0 0 28 26" className="w-[28px] h-[26px]">
        <path d="M1 7h9v13H1z" fill="#8f989d" /><path d="M2 9h5v9H2z" fill="#c5ccd0" />
        <path d="M6 2l21-1-1 16-18-1z" fill="#b9c4ca" />
        <path d="M8 4l17-1-1 12-15-1z" fill="#eaf5fb" /><path d="M9 11l3-1 2-4 2 7 2-5 2 3 3-1" stroke="#2a77ad" strokeWidth="1.200" />
        <path d="M15 17h5v3c4 0 6 2 4 4-3 2-9 2-12 0-2-2 0-4 3-4z" fill="#cfd6da" />
      </Icon>
    ),
  },
  {
    name: 'terminal',
    icon: (
      <Icon box="0 0 27 22" className="w-[27px] h-[23px]">
        <path d="M.7.7h25.600v20.600H.7z" fill="#050505" stroke="#8d8d8d" strokeWidth="1.400" />
        <path d="M1 1h25v2H1z" fill="#ccc" /><path d="M4 5l3 2-3 2M8 9h5" stroke="#bbb" />
      </Icon>
    ),
  },
  {
    name: 'store',
    icon: (
      <Icon box="0 0 30 30" className="w-[30px] h-[29px]">
        <path d="M9 6V1.200h12V6" stroke="#32a9e8" strokeWidth="2.400" />
        <path d="M0 5h30v21q0 4-4 4H4q-4 0-4-4z" fill="#f5f5f5" />
        <path d="M9.500 12h5v5h-5z" fill="#e35535" /><path d="M15.500 12h5v5h-5z" fill="#7cb53c" />
        <path d="M9.500 18h5v5h-5z" fill="#2f96d8" /><path d="M15.500 18h5v5h-5z" fill="#f3b62c" />
      </Icon>
    ),
  },
  {
    name: 'notepad',
    icon: (
      <Icon box="0 0 27 27" className="w-[27px] h-[26px]">
        <path d="M9 2l17 2-6 22L0 21z" fill="#76b9c9" /><path d="M10 1l16 2-4 12-16-3z" fill="#a7dbe2" />
        <path d="M0 21l20 3 6-19 1 2-6 19z" fill="#e5eced" /><path d="M2 20l5-7 14 2-3 7z" fill="#549bb2" />
      </Icon>
    ),
  },
  {
    name: 'explorer',
    icon: (
      <Icon box="0 0 28 24" className="w-[28px] h-[24px]">
        <path d="M0 1h10l3 3h15v18H0z" fill="#f0b429" /><path d="M0 6h28v16H0z" fill="#ffdb70" />
        <path d="M5 24V14h18v10h-5v-5h-8v5z" fill="#3b90d6" />
      </Icon>
    ),
  },
  {
    name: 'drive',
    icon: (
      <Icon box="0 0 27 18" className="w-[27px] h-[18px]">
        <path d="M0 8L14 0l13 6v4L13 18 0 13z" fill="#fff" /><path d="M1 9l12 4.500L26 7M13 13v4M16 14.500l7-3.500" stroke="#3a4050" strokeWidth="1.200" />
      </Icon>
    ),
  },
  {
    name: 'gimp',
    icon: (
      <Icon box="0 0 28 19" className="w-[27px] h-[17px]">
        <path d="M7 6c4 1 9 1 13 0l4-5c2 4 2 9 0 13l-6 3-10-2-4-4z" fill="#5f5c4e" />
        <circle cx="8" cy="8" r="3" fill="#e8e8e8" /><circle cx="14" cy="7" r="3.500" fill="#f0f0f0" />
        <circle cx="8.500" cy="8" r="1.400" fill="#111" /><circle cx="14.500" cy="7.500" r="1.700" fill="#111" />
        <circle cx="2" cy="9" r="1.600" fill="#ddd" /><path d="M21 13l5 5" stroke="#ccc" strokeWidth="1.800" />
      </Icon>
    ),
  },
  {
    name: 'fusion',
    active: true,
    icon: (
      <div className="w-[30px] h-[30px] bg-[#fbe5d2] flex items-center justify-center">
        <Icon box="0 0 14 22" className="w-[14px] h-[22px]">
          <path d="M2 0h12v5H6v4h6v5H7v8H2z" fill="#c9731c" /><path d="M2 0h12v5H6L2 3z" fill="#e49642" />
        </Icon>
      </div>
    ),
  },
  {
    name: 'block',
    icon: (
      <Icon box="0 0 30 30" className="w-[29px] h-[29px]">
        <path d="M15 0l15 7-15 8L0 7z" fill="#6faa4a" /><path d="M0 7l15 8v15L0 22z" fill="#8a5638" />
        <path d="M30 7l-15 8v15l15-8z" fill="#643c28" />
        <path d="M0 7l15 8v4l-4-3-3 2-4-4-4 1zM30 7l-15 8v4l4-3 3 1 4-4 4 1z" fill="#4d7d33" />
        <path d="M3 17l3 2M8 22l4 2M19 22l3-1M24 17l3-2" stroke="#b07a56" strokeWidth="2" />
      </Icon>
    ),
  },
  {
    name: 'tile',
    icon: (
      <Icon box="0 0 30 30" className="w-[30px] h-[30px]">
        <path d="M0 0h30v30H0z" fill="#000" /><path d="M5 5h20v20H5z" fill="#92592f" />
        <path d="M5 5h20v4h-3v2h-3V8h-4v3h-3V9H9v2H5z" fill="#4f8a32" />
        <path d="M7 14h3M14 13h3M21 15h3M9 19h3M17 20h4M6 22h3M13 23h3" stroke="#c58a4e" strokeWidth="1.700" />
        <path d="M10 16h3M18 17h3M6 18h2M13 20h2M21 22h3" stroke="#613a1e" strokeWidth="1.700" />
      </Icon>
    ),
  },
  {
    name: 'edge',
    icon: (
      <Icon box="0 0 30 30" className="w-[30px] h-[30px]">
        <defs>
          <linearGradient id="edgeTop" x1="0" y1="0" x2="1" y2=".6"><stop offset="0" stopColor="#2f9fe0" /><stop offset=".5" stopColor="#36c3d8" /><stop offset="1" stopColor="#62dd55" /></linearGradient>
        </defs>
        <path d="M0 14C1 5 8 0 15 0c9 0 15 6 15 13 0 5-5 7-11 6-1-1-1-2 0-3 1-5-3-8-7-8C6 8 1 11 0 14z" fill="url(#edgeTop)" />
        <path d="M0 14C2 9 7 7 12 8c-3 2-4 6-3 10 2 6 8 9 18 6-3 4-8 6-12 6C6 30 0 23 0 14z" fill="#1e7fd2" />
        <path d="M12 8c4 0 8 3 7 7-3-2-6 1-5 4 1 4 6 7 13 5-3 4-8 5-12 4C9 26 7 20 8 15c0-3 2-6 4-7z" fill="#135ba8" />
      </Icon>
    ),
  },
  {
    name: 'chrome',
    icon: (
      <Icon box="-14 -14 28 28" className="w-[28px] h-[28px]">
        <circle r="14" fill="#f9c82e" />
        <path d="M0 0L-12.100-7A14 14 0 0 1 12.100-7z" fill="#e24235" />
        <path d="M-12.100-7A14 14 0 0 0-1 14L6 3.500H-6z" fill="#2ea150" />
        <path d="M0-6.500h12.400L12-7H-12.100L-5.500 3.500z" fill="#e24235" />
        <circle r="6.600" fill="#fff" /><circle r="5" fill="#3e7fe8" />
      </Icon>
    ),
  },
]

const BIRDS = [
  { color: '#e5484d', ml: 'ml-[15px]' },
  { color: '#e3529b', ml: 'ml-[13px]' },
  { color: '#f4dc8a', ml: 'ml-[14px]' },
  { color: '#e88074', ml: 'ml-[14px]' },
  { color: '#d149cf', ml: 'ml-[14px]' },
  { color: '#79e8dc', ml: 'ml-[13px]', flip: true },
  { color: '#79e8dc', ml: 'ml-[14px]', flip: true },
  { color: '#ea7a70', ml: 'ml-[15px]' },
  { color: '#f4dc8a', ml: 'ml-[14px]' },
  { color: '#cf86ee', ml: 'ml-[13px]' },
  { color: '#b78af0', ml: 'ml-[13px]' },
  { color: '#e5534d', ml: 'ml-[18px]' },
]

function Taskbar() {
  return (
    <div className="h-[46px] flex items-center shrink-0 bg-linear-to-r from-[#262d3a] via-[#212c40] to-[#222a35] text-white">
      <div className="w-[60px] flex justify-center pt-[2px]">
        <Icon box="0 0 20 20" className="w-[20px] h-[20px]">
          <path d="M0 3l8.500-1.200v7.700H0zM9.500 1.600L20 0v9.500H9.500zM0 10.500h8.500v7.700L0 17zM9.500 10.500H20V20L9.500 18.400z" fill="#fff" />
        </Icon>
      </div>
      <div className="w-[60px] flex justify-center pt-[1px]">
        <Icon box="0 0 21 21" className="w-[21px] h-[21px]">
          <circle cx="13" cy="8" r="6.800" stroke="#fff" strokeWidth="1.500" /><path d="M8.300 13L.7 20.500" stroke="#fff" strokeWidth="1.500" />
        </Icon>
      </div>
      <div className="w-[63px] flex justify-center pr-[4px]">
        <Icon box="0 0 20 20" className="w-[20px] h-[20px]">
          <path d="M1 .5v4h12v-4M1 19.500v-4h12v4M1.700 4.500v11M12.300 4.500v11M18.500 0v4M18.500 10v9.500" stroke="#fff" strokeWidth="1.400" />
          <path d="M17 6h3v3h-3z" fill="#fff" />
        </Icon>
      </div>
      {APPS.map(a => (
        <div key={a.name} className={clsx('w-[61.900px] h-full flex items-center justify-center pt-[3px] shrink-0', a.active && 'bg-[#4b5767]')}>
          {a.icon}
        </div>
      ))}
      <div className="ml-auto flex items-center">
        <Icon box="0 0 16 9" className="w-[16px] h-[9px] mt-[2px]"><path d="M.7 8.500L8 1l7.300 7.500" stroke="#fff" strokeWidth="1.500" /></Icon>
        {BIRDS.map((b, i) => (
          <Icon key={i} box="0 0 16 14" className={clsx('w-[15px] h-[13px] mr-px mt-[11px]', b.ml, b.flip && '-scale-x-100')}>
            <path d="M0 14l5-5c0-6 3-9 6-9 4 1 5 5 4 8l1 6z" fill={b.color} />
            <path d="M9 3l3 1-1 6-2-2z" fill="#3a3030" opacity=".8" />
            <path d="M11 2.500h2" stroke="#fff" />
            <path d="M6 12l3-2" stroke="#5a3040" opacity=".6" />
          </Icon>
        ))}
        <Icon box="0 0 20 14" className="w-[20px] h-[15px] ml-[10px]">
          <path d="M5.500 2.500h13v10.500H4V8M19.500 6v4" stroke="#fff" strokeWidth="1.300" />
          <path d="M0 2h5v3L3.500 6.500v3h-1v-3L0 5zM1 0v2M4 0v2M6 5h5v6H6z" fill="#fff" stroke="#fff" strokeWidth=".6" />
        </Icon>
        <Icon box="0 0 16 16" className="w-[16px] h-[16px] ml-[13px] mt-[2px]">
          <path d="M1 16C1 7 6 1 15 1M5 16C5 10 9 5 15 5M9 16c0-4 2-7 6-7" stroke="#fff" strokeWidth="1.200" />
          <circle cx="14" cy="14" r="1.700" fill="#fff" />
        </Icon>
        <Icon box="0 0 18 18" className="w-[18px] h-[18px] ml-[11px] mt-[3px]">
          <circle cx="9" cy="9" r="9" fill="#a0a3a8" /><path d="M5 5l8 8M13 5l-8 8" stroke="#20262f" strokeWidth="1.900" />
        </Icon>
        <div className="w-[80px] ml-[11px] text-center text-[14.500px] leading-[23px] tracking-[-0.200px] font-['Open_Sans',sans-serif] mt-[2px]">
          <div>18:47</div>
          <div>2022/03/08</div>
        </div>
        <Icon box="0 0 20 20" className="w-[20px] h-[20px] ml-[21px] mr-[27px] mt-[4px]">
          <path d="M.8.800h18.400v15h-6L10 19l-3.200-3.200h-6z" stroke="#fff" strokeWidth="1.300" />
        </Icon>
      </div>
    </div>
  )
}

export default function App() {
  return (
    <div className="w-[1916px] h-[1076px] flex flex-col overflow-hidden bg-white">
      <TitleBar />
      <DocumentTabs />
      <Ribbon />
      <Viewport />
      <Timeline />
      <Taskbar />
    </div>
  )
}
